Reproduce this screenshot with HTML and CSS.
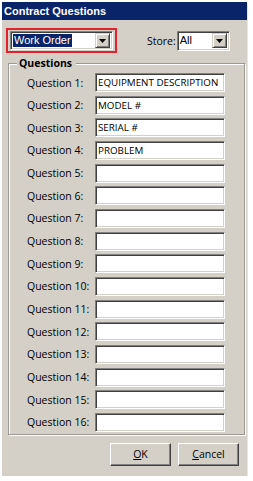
FILE: index.html
```html
<!DOCTYPE html>
<html>
<head>
<meta charset="utf-8">
<link rel="stylesheet" href="styles.css">
</head>
<body>
<div class="dialog">
  <div class="titlebar">Contract Questions</div>
  <div class="toprow">
    <div class="redbox">
      <div class="combo combo-wide">
        <span class="value"><span class="sel">Work Order</span></span>
        <span class="dropbtn"><svg width="7" height="4" viewBox="0 0 7 4"><path d="M0 0H7L3.5 4Z" fill="#000"/></svg></span>
      </div>
    </div>
    <span class="storelabel">Store:</span>
    <div class="combo combo-store">
      <span class="value">All</span>
      <span class="dropbtn"><svg width="7" height="4" viewBox="0 0 7 4"><path d="M0 0H7L3.5 4Z" fill="#000"/></svg></span>
    </div>
  </div>
  <div class="group">
    <span class="legend">Questions</span>
    <div class="rows">
      <span class="lbl">Question 1:</span><div class="field">EQUIPMENT DESCRIPTION</div>
      <span class="lbl">Question 2:</span><div class="field">MODEL #</div>
      <span class="lbl">Question 3:</span><div class="field">SERIAL #</div>
      <span class="lbl">Question 4:</span><div class="field">PROBLEM</div>
      <span class="lbl">Question 5:</span><div class="field"></div>
      <span class="lbl">Question 6:</span><div class="field"></div>
      <span class="lbl">Question 7:</span><div class="field"></div>
      <span class="lbl">Question 8:</span><div class="field"></div>
      <span class="lbl">Question 9:</span><div class="field"></div>
      <span class="lbl">Question 10:</span><div class="field"></div>
      <span class="lbl">Question 11:</span><div class="field"></div>
      <span class="lbl">Question 12:</span><div class="field"></div>
      <span class="lbl">Question 13:</span><div class="field"></div>
      <span class="lbl">Question 14:</span><div class="field"></div>
      <span class="lbl">Question 15:</span><div class="field"></div>
      <span class="lbl">Question 16:</span><div class="field"></div>
    </div>
  </div>
  <div class="buttons">
    <button class="btn"><u>O</u>K</button>
    <button class="btn"><u>C</u>ancel</button>
  </div>
</div>
</body>
</html>
```

FILE: styles.css
```css
html, body {
  margin: 0;
  padding: 0;
  background: #ffffff;
}
body {
  font-family: "Open Sans", "Liberation Sans", sans-serif;
  font-size: 10.5px;
  color: #000;
}
.dialog {
  margin: 2px 0 0 2px;
  width: 245px;
  height: 474px;
  background: #d4d0c8;
  box-shadow: 1px 1px 0 #e8e6e2;
  display: flex;
  flex-direction: column;
}
.titlebar {
  height: 18px;
  line-height: 18px;
  background: #0a246a;
  color: #ffffff;
  font-family: "Liberation Sans", Arial, sans-serif;
  font-weight: bold;
  font-size: 11px;
  padding-left: 2px;
}
.toprow {
  display: flex;
  align-items: center;
  margin-top: 8px;
  padding-left: 4px;
  height: 25px;
}
.redbox {
  border: 2px solid #e0232e;
  padding: 1px 2px;
  display: flex;
}
.combo {
  box-sizing: border-box;
  background: #ffffff;
  border-top: 1px solid #808080;
  border-left: 1px solid #808080;
  border-right: 1px solid #ffffff;
  border-bottom: 1px solid #ffffff;
  box-shadow: inset 1px 1px 0 #404040, inset -1px -1px 0 #d4d0c8;
  display: flex;
  align-items: center;
  padding: 2px;
  font-family: "Liberation Sans", Arial, sans-serif;
  font-size: 11px;
}
.combo-wide {
  width: 103px;
  height: 19px;
}
.combo-store {
  width: 53px;
  height: 20px;
}
.value {
  flex: 1;
  display: flex;
  align-items: center;
  height: 13px;
  line-height: 13px;
}
.sel {
  background: #0a246a;
  color: #fff;
  padding: 0 1px;
  height: 13px;
}
.dropbtn {
  box-sizing: border-box;
  width: 15px;
  height: 15px;
  background: #d4d0c8;
  border-top: 1px solid #d4d0c8;
  border-left: 1px solid #d4d0c8;
  border-right: 1px solid #404040;
  border-bottom: 1px solid #404040;
  box-shadow: inset 1px 1px 0 #ffffff, inset -1px -1px 0 #808080;
  display: flex;
  align-items: center;
  justify-content: center;
}
.storelabel {
  margin-left: 30px;
  margin-right: 1px;
}
.group {
  position: relative;
  margin: 10px 2px 0 6px;
  border: 1px solid #9a9892;
  box-shadow: inset 1px 1px 0 #ffffff, 1px 1px 0 #ffffff;
  padding: 9px 19px 2px 18px;
}
.legend {
  position: absolute;
  top: -9px;
  left: 8px;
  padding: 0 4px 0 2px;
  background: #d4d0c8;
  font-weight: bold;
  line-height: 16px;
}
.rows {
  display: grid;
  grid-template-columns: 68px 130px;
  grid-auto-rows: 19px;
  row-gap: 3.67px;
  align-items: center;
}
.lbl {
  white-space: nowrap;
}
.field {
  box-sizing: border-box;
  height: 19px;
  background: #ffffff;
  border-top: 1px solid #808080;
  border-left: 1px solid #808080;
  border-right: 1px solid #ffffff;
  border-bottom: 1px solid #ffffff;
  box-shadow: inset 1px 1px 0 #404040, inset -1px -1px 0 #d4d0c8;
  padding: 0 2px 0 2px;
  font-size: 9.8px;
  line-height: 17px;
  white-space: nowrap;
  overflow: hidden;
}
.buttons {
  display: flex;
  justify-content: flex-end;
  gap: 7px;
  margin-top: 8px;
  padding-right: 8px;
}
.btn {
  box-sizing: border-box;
  width: 61px;
  height: 23px;
  background: #d4d0c8;
  border-top: 1px solid #ffffff;
  border-left: 1px solid #ffffff;
  border-right: 1px solid #404040;
  border-bottom: 1px solid #404040;
  box-shadow: inset -1px -1px 0 #808080;
  font-family: "Open Sans", "Liberation Sans", sans-serif;
  font-size: 10.5px;
  color: #000;
  padding: 0;
}
```
